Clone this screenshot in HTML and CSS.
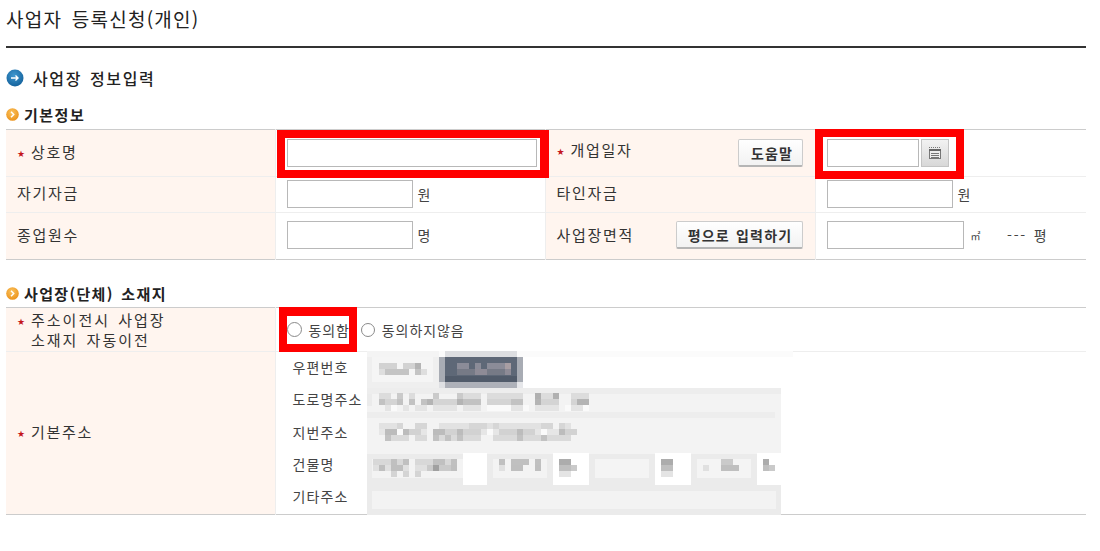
FILE: index.html
```html
<!DOCTYPE html>
<html lang="ko">
<head>
<meta charset="utf-8">
<title>사업자 등록신청(개인)</title>
<link rel="stylesheet" href="styles.css">
</head>
<body>
<main class="page">
  <h1 class="title">사업자 등록신청(개인)</h1>
  <h2 class="section">
    <svg class="ico-blue" width="18" height="18" viewBox="0 0 18 18"><defs><radialGradient id="bl" cx="45%" cy="35%" r="70%"><stop offset="0" stop-color="#3f97cf"/><stop offset="1" stop-color="#125f99"/></radialGradient></defs><circle cx="9" cy="9" r="8.5" fill="url(#bl)"/><path d="M5 9h7M9.5 6.500 12 9l-2.500 2.500" fill="none" stroke="#fff" stroke-width="1.400"/></svg>
    <span>사업장 정보입력</span>
  </h2>
  <h3 class="sub">
    <svg width="13" height="13" viewBox="0 0 13 13"><defs><radialGradient id="or" cx="45%" cy="35%" r="70%"><stop offset="0" stop-color="#fbc35e"/><stop offset="1" stop-color="#ea8f16"/></radialGradient></defs><circle cx="6.500" cy="6.500" r="6.300" fill="url(#or)"/><path d="M5 3.800 7.700 6.500 5 9.200" fill="none" stroke="#fff" stroke-width="1.500"/></svg>
    <span>기본정보</span>
  </h3>
  <table class="form basic">
    <colgroup><col class="c1"><col class="c2"><col class="c3"><col class="c4"></colgroup>
    <tr class="r1">
      <th><span class="star">★</span>상호명</th>
      <td class="framed"><input class="in in-name" type="text"><span class="frame f-name"></span></td>
      <th class="lift"><div class="th-flex"><span class="lift-text"><span class="star">★</span>개업일자</span><button class="btn" type="button">도움말</button></div></th>
      <td class="framed">
        <div class="date"><input class="in in-date" type="text"><span class="cal"><svg width="14" height="14" viewBox="0 0 14 14"><path d="M1 1.500h12" stroke="#777" stroke-width="1" stroke-dasharray="1 1"/><rect x="1.500" y="3.500" width="11" height="9" fill="#eee" stroke="#777"/><rect x="1" y="3" width="12" height="2" fill="#666"/><path d="M3 7.500h8M3 9.500h8M3 11.500h8" stroke="#777" stroke-width="1.200"/></svg></span></div>
        <span class="frame f-date"></span>
      </td>
    </tr>
    <tr class="r2">
      <th>자기자금</th>
      <td><input class="in in-s" type="text"><span class="unit">원</span></td>
      <th>타인자금</th>
      <td><input class="in in-s" type="text"><span class="unit">원</span></td>
    </tr>
    <tr class="r3">
      <th>종업원수</th>
      <td><input class="in in-s" type="text"><span class="unit">명</span></td>
      <th><div class="th-flex"><span>사업장면적</span><button class="btn" type="button">평으로 입력하기</button></div></th>
      <td><input class="in in-m" type="text"><span class="unit sq">㎡</span><span class="unit py">--- 평</span></td>
    </tr>
  </table>
  <h3 class="sub second">
    <svg width="13" height="13" viewBox="0 0 13 13"><circle cx="6.500" cy="6.500" r="6.300" fill="url(#or)"/><path d="M5 3.800 7.700 6.500 5 9.200" fill="none" stroke="#fff" stroke-width="1.500"/></svg>
    <span>사업장(단체) 소재지</span>
  </h3>
  <table class="form addr">
    <colgroup><col class="c1"><col class="c234"></colgroup>
    <tr class="r4">
      <th class="two"><span class="star">★</span>주소이전시 사업장<br><span class="ind">소재지 자동이전</span></th>
      <td class="framed">
        <div class="radios">
          <label class="radio"><span class="dot"></span>동의함</label>
          <label class="radio r-b"><span class="dot"></span>동의하지않음</label>
        </div>
        <span class="frame f-radio"></span>
      </td>
    </tr>
    <tr class="r5">
      <th class="th-addr"><span class="star">★</span>기본주소</th>
      <td class="addr-cell">
        <div class="addr-flex">
          <ul class="addr-labels">
            <li>우편번호</li><li>도로명주소</li><li>지번주소</li><li>건물명</li><li>기타주소</li>
          </ul>
          <svg class="mosaic" width="426" height="164" viewBox="0 0 426 164" shape-rendering="crispEdges" aria-label="가려진 주소">
            <rect x="0" y="0" width="426" height="6" fill="#fbfbfb"/>
            <rect x="0" y="0" width="72" height="6" fill="#f4f4f4"/>
            <rect x="0" y="6" width="72" height="31" fill="#efefef"/>
            <rect x="5" y="6" width="61" height="25" fill="#f5f5f5"/>
            <rect x="72" y="6" width="6" height="25" fill="#a8acb4"/>
            <rect x="150" y="6" width="6" height="25" fill="#a8acb4"/>
            <rect x="78" y="0" width="72" height="6" fill="#dddee1"/>
            <rect x="78" y="6" width="72" height="25" fill="#5e6877"/>
            <rect x="78" y="25" width="72" height="6" fill="#515b6a"/>
            <rect x="78" y="31" width="72" height="6" fill="#aeb1b9"/>
            <rect x="72" y="31" width="6" height="6" fill="#dfe0e3"/>
            <rect x="150" y="31" width="6" height="6" fill="#e6e7ea"/>
            <path stroke="#8b8c98" stroke-width="6" d="M90 15h12M108 15h6M120 15h18"/>
            <path stroke="#a89ea3" stroke-width="6" d="M138 15h6"/>
            <path stroke="#767a86" stroke-width="6" d="M90 21h18M120 21h18"/>
            <path stroke="#8e8b96" stroke-width="6" d="M108 21h12M138 21h6"/>
            <path stroke="#d2d2d2" stroke-width="6" d="M12 15h18M36 15h12"/>
            <path stroke="#b4b4b4" stroke-width="6" d="M48 15h6"/>
            <path stroke="#c4c4c4" stroke-width="6" d="M18 21h18M36 21h6M48 21h6"/>
            <path stroke="#dedede" stroke-width="6" d="M12 21h6M54 21h6"/>

            <rect x="0" y="37" width="414" height="66" fill="#f3f3f3"/>
            <path stroke="#ededed" stroke-width="6" d="M0 40h414M0 64h408"/>
            <path stroke="#ebebeb" stroke-width="6" d="M0 46h5M0 52h5"/>
            <path stroke="#dcdcdc" stroke-width="6" d="M12 45h12M42 45h6M96 45h18M120 45h36M174 45h12M204 45h18"/>
            <path stroke="#cacaca" stroke-width="6" d="M30 45h6M66 45h6M90 45h6"/>
            <path stroke="#b0b0b0" stroke-width="6" d="M168 45h6M186 45h6"/>
            <path stroke="#c2c2c2" stroke-width="6" d="M12 51h6M30 51h6M42 51h6M54 51h6M96 51h18M144 51h12"/>
            <path stroke="#d4d4d4" stroke-width="6" d="M18 51h12M66 51h24M120 51h24M174 51h18M204 51h6"/>
            <path stroke="#b4b4b4" stroke-width="6" d="M60 51h6M90 51h6M168 51h6M210 51h12"/>
            <path stroke="#e4e4e4" stroke-width="6" d="M18 57h6M36 57h6M48 57h12M66 57h24M96 57h18M144 57h12M168 57h24M204 57h12"/>
            <path stroke="#fafafa" stroke-width="6" d="M24 57h6M120 57h24M156 57h6M198 57h6M216 57h6"/>

            <path stroke="#d6d6d6" stroke-width="6" d="M30 75h6M48 75h6M54 75h6M102 75h18M126 75h6M174 75h12M192 75h6"/>
            <path stroke="#e2e2e2" stroke-width="6" d="M12 75h18M72 75h30M120 75h6M132 75h42M198 75h6"/>
            <path stroke="#bcbcbc" stroke-width="6" d="M18 81h12M36 81h6M66 81h12M90 81h6M150 81h6M192 81h6"/>
            <path stroke="#d2d2d2" stroke-width="6" d="M42 81h12M78 81h12M96 81h18M132 81h18M156 81h12M198 81h12"/>
            <path stroke="#fafafa" stroke-width="6" d="M30 81h6M120 81h6M174 81h6"/>
            <path stroke="#e6e6e6" stroke-width="6" d="M12 81h6M54 81h6M114 81h6M126 81h6M168 81h6M180 81h12"/>
            <path stroke="#c2c2c2" stroke-width="6" d="M18 87h6M66 87h6M78 87h6M90 87h6M150 87h6M174 87h6"/>
            <path stroke="#dadada" stroke-width="6" d="M24 87h18M48 87h12M72 87h6M84 87h6M96 87h18M126 87h24M156 87h18M180 87h24"/>

            <rect x="0" y="103" width="414" height="31" fill="#ebebeb"/>
            <rect x="5" y="108" width="91" height="19" fill="#f3f3f3"/>
            <rect x="126" y="108" width="54" height="19" fill="#f3f3f3"/>
            <rect x="228" y="108" width="54" height="19" fill="#f4f4f4"/>
            <rect x="330" y="108" width="54" height="19" fill="#f4f4f4"/>
            <rect x="96" y="102" width="24" height="32" fill="#fff"/>
            <rect x="186" y="102" width="36" height="32" fill="#fff"/>
            <rect x="288" y="102" width="36" height="32" fill="#fff"/>
            <rect x="390" y="102" width="24" height="32" fill="#fff"/>
            <path stroke="#d8d8d8" stroke-width="6" d="M6 111h18M30 111h6M48 111h18M78 111h6"/>
            <path stroke="#c0c0c0" stroke-width="6" d="M24 111h6M36 111h6M66 111h12M84 111h6M132 111h6M144 111h18M168 111h6"/>
            <path stroke="#acacac" stroke-width="6" d="M192 111h12M294 111h12M396 111h6"/>
            <path stroke="#cacaca" stroke-width="6" d="M354 111h12"/>
            <path stroke="#e0e0e0" stroke-width="6" d="M6 117h6M18 117h6M36 117h6M48 117h12M78 117h12M132 117h6M336 117h6"/>
            <path stroke="#bfbfbf" stroke-width="6" d="M12 117h6M24 117h12M84 117h6M144 117h12M168 117h6M192 117h12M294 117h12M354 117h18M396 117h6"/>
            <path stroke="#a0a0a0" stroke-width="6" d="M66 117h6"/>
            <path stroke="#cacaca" stroke-width="6" d="M60 117h6M72 117h12M204 117h6M402 117h6"/>
            <path stroke="#d4d4d4" stroke-width="6" d="M24 123h6M36 123h6M48 123h6"/>
            <path stroke="#e4e4e4" stroke-width="6" d="M192 123h12M294 123h12"/>

            <rect x="0" y="134" width="414" height="30" fill="#ebebeb"/>
            <rect x="5" y="140" width="404" height="18" fill="#f3f3f3"/>
          </svg>
        </div>
      </td>
    </tr>
  </table>
</main>
</body>
</html>
```
FILE: styles.css
```css
* { box-sizing: border-box; }
html, body { margin: 0; background: #fff; }
body {
  font-family: "Noto Sans CJK KR", "Noto Sans", sans-serif;
  color: #333;
  font-size: 14px;
}
.page { width: 1080px; margin-left: 6px; height: 551px; overflow: hidden; }

.title {
  margin: 0;
  height: 48px;
  padding-top: 5px;
  border-bottom: 2px solid #333;
  font-size: 19px;
  line-height: 28px;
  font-weight: 400;
  letter-spacing: 1.25px;
  word-spacing: 3px;
  color: #222;
}
.section {
  margin: 0;
  padding-top: 10px;
  display: flex;
  align-items: center;
  height: 50px;
  font-size: 16px;
  font-weight: 500;
  letter-spacing: 1.6px;
  word-spacing: 2px;
  color: #222;
}
.section span { margin-left: 9px; }
.sub {
  margin: 0;
  height: 31px;
  padding-top: 2px;
  display: flex;
  align-items: center;
  font-size: 15px;
  font-weight: 700;
  letter-spacing: 1.5px;
  color: #222;
}
.sub span { margin-left: 5px; }
.sub.second { margin-top: 19px; height: 28px; padding-top: 0; word-spacing: 2px; letter-spacing: 1.35px; }

.form {
  width: 1080px;
  border-collapse: collapse;
  table-layout: fixed;
  border-top: 1px solid #ccc;
  border-bottom: 1px solid #ccc;
}
.c1 { width: 269px; }
.c3 { width: 270px; }
.c2 { width: 270px; }
.c4 { width: 271px; }
.form th, .form td { padding: 0; border-top: 1px solid #eee; border-left: 1px solid #eee; vertical-align: middle; }
.form tr:first-child th, .form tr:first-child td { border-top: 0; }
.form th:first-child { border-left: 0; }
.form th {
  background: #fff5ef;
  text-align: left;
  font-weight: 400;
  font-size: 15px;
  letter-spacing: 1.7px;
  padding-left: 11px;
  color: #333;
  padding-right: 12px;
  line-height: 18px;
}
.form td { padding-left: 11px; font-size: 14px; position: relative; }
.r1 { height: 47px; }
.r2 { height: 36px; }
.r3 { height: 47px; }
.r4 { height: 44px; }
.r5 { height: 163px; }
.r2 th, .r3 th { padding-bottom: 3px; }
.r2 td, .r3 td { padding-bottom: 2px; }
.r3 .th-flex .btn { margin-bottom: -1px; }
.lift-text { position: relative; top: -2px; }
.th-addr { padding-top: 3px; }
.star { color: #c4161c; font-size: 9px; display: inline-block; width: 14px; vertical-align: 1px; letter-spacing: 0; font-family: "DejaVu Sans", sans-serif; }
.ind { padding-left: 14px; }
.form th.two { word-spacing: 2px; letter-spacing: 2px; line-height: 17px; padding-bottom: 1px; }
.th-flex { display: flex; align-items: center; justify-content: space-between; }

.in { display: inline-block; height: 28px; border: 1px solid #b8b8b8; background: #fff; padding: 0; margin: 0; vertical-align: middle; }
.in-name { width: 250px; }
.in-date { width: 92px; }
.in-s { width: 126px; }
.in-m { width: 137px; }
.unit { margin-left: 5px; vertical-align: middle; color: #444; letter-spacing: .5px; }
.sq { margin-left: 7px; font-size: 10px; }
.py { margin-left: 26px; letter-spacing: 1.8px; word-spacing: 1px; }

.date { display: flex; gap: 2px; }
.cal { width: 28px; height: 28px; border: 1px solid #c4c4c4; background: linear-gradient(#f2f2f2, #d8d8d8); display: flex; align-items: center; justify-content: center; }

.btn {
  height: 28px;
  padding: 0 10px;
  border: 1px solid #ccc;
  border-bottom: 2px solid #b5b5b5;
  border-radius: 2px;
  background: linear-gradient(#fff, #f2f2f2);
  font-family: inherit;
  font-size: 14px;
  font-weight: 700;
  letter-spacing: 1.2px;
  word-spacing: 1px;
  color: #333;
  white-space: nowrap;
}
.r1 .btn { width: 65px; padding: 0 0 0 4px; }
.r3 .btn { width: 127px; padding: 0 0 0 2px; }

.frame { position: absolute; border: solid #f00; pointer-events: none; }
.f-name { left: 1px; top: 0; width: 272px; height: 48px; border-width: 8px 9px 8px 8px; }
.f-date { left: -1px; top: -1px; width: 149px; height: 50px; border-width: 8px; }
.f-radio { left: 3px; top: -1px; width: 78px; height: 45px; border-width: 9px 8px 8px 8px; }

.radios { display: flex; align-items: center; color: #444; font-size: 14px; letter-spacing: .9px; }
.radio { display: flex; align-items: center; }
.r-b { margin-left: 11px; }
.dot { width: 15px; height: 15px; border: 1.5px solid #8a8a8a; border-radius: 50%; margin-right: 7px; background: #fff; }
.r-b .dot { width: 14px; height: 14px; }

.form td.addr-cell { padding: 0; }
.addr-flex { display: flex; }
.addr-labels { list-style: none; margin: 0; padding: 0 0 0 17px; width: 91px; display: flex; flex-direction: column; }
.addr-labels li { height: 32.300px; line-height: 31px; font-size: 14px; letter-spacing: 1.1px; color: #444; white-space: nowrap; }
.mosaic { display: block; flex: none; margin: -1px 0 -1px; }
```
